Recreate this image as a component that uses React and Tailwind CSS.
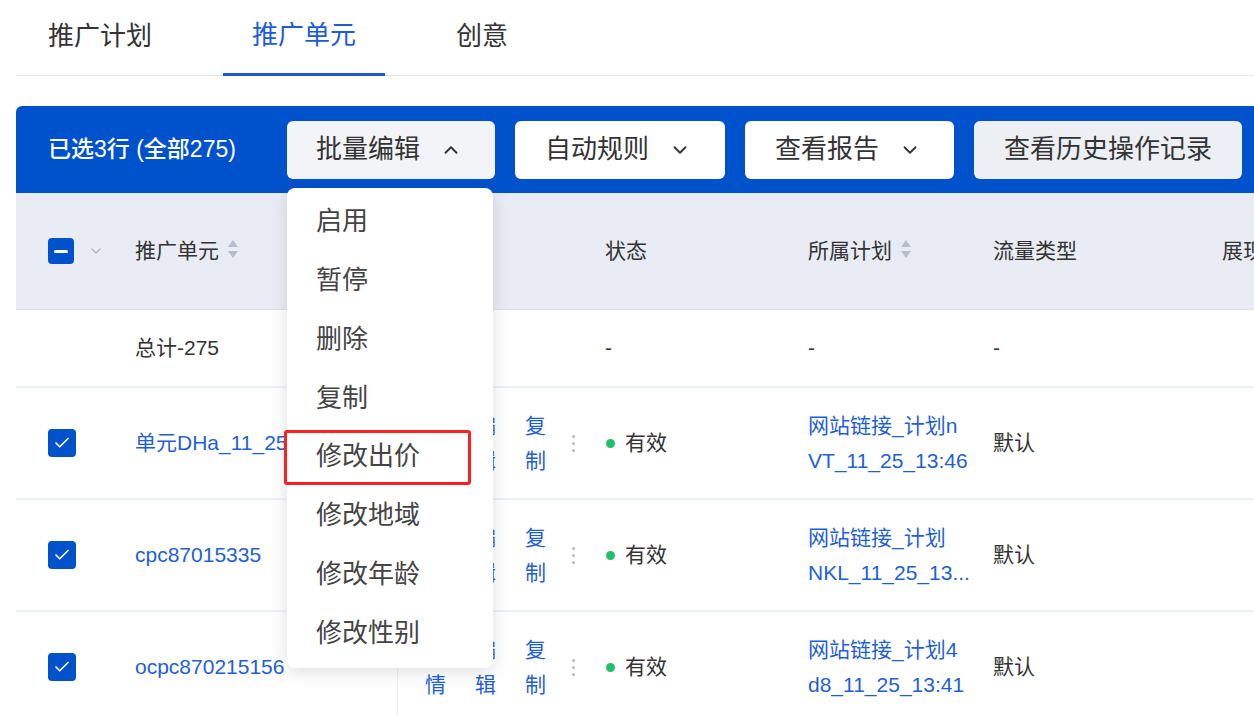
import { ChevronDown, ChevronUp, Check } from 'lucide-react';

const FONT = "font-['Liberation_Sans','Noto_Sans_CJK_SC',sans-serif]";

const MENU = ['启用', '暂停', '删除', '复制', '修改出价', '修改地域', '修改年龄', '修改性别'];

const ROWS = [
  { name: '单元DHa_11_25_13:46', plan: ['网站链接_计划n', 'VT_11_25_13:46'] },
  { name: 'cpc87015335', plan: ['网站链接_计划', 'NKL_11_25_13...'] },
  { name: 'ocpc870215156', plan: ['网站链接_计划4', 'd8_11_25_13:41'] },
];

function SortIcon() {
  return (
    <svg width="12" height="20" viewBox="0 0 12 20" className="ml-[8px] -mt-[4px] shrink-0">
      <path d="M6 1 L11 8 H1 Z" fill="#b8bfcc" />
      <path d="M6 19 L11 12 H1 Z" fill="#b8bfcc" />
    </svg>
  );
}

function CheckBox() {
  return (
    <div className="w-[28px] h-[28px] rounded-[4px] bg-[#0052cc] flex items-center justify-center">
      <Check size={18} strokeWidth={2.2} color="#fff" />
    </div>
  );
}

function VerticalLink({ text }) {
  return (
    <div className="w-[22px] shrink-0 flex flex-col leading-[35px] text-[#1f5fd6]">
      {text.split('').map((c, i) => (
        <span key={i}>{c}</span>
      ))}
    </div>
  );
}

function MoreDots() {
  return (
    <div className="flex flex-col gap-[4px] -ml-[3px] shrink-0">
      <span className="w-[3px] h-[3px] rounded-full bg-[#b5bac4]" />
      <span className="w-[3px] h-[3px] rounded-full bg-[#b5bac4]" />
      <span className="w-[3px] h-[3px] rounded-full bg-[#b5bac4]" />
    </div>
  );
}

export default function App() {
  return (
    <div className={`w-[1254px] h-[716px] overflow-hidden bg-white pl-4 text-[#333] ${FONT}`}>
      {/* Tabs */}
      <div className="flex h-[76px] border-b border-[#dfe3ea] gap-[41px] pl-[2px]">
        <div className="px-[30px] flex items-center text-[26px] text-[#333] pb-[2px]">推广计划</div>
        <div className="px-[29px] flex items-center text-[26px] text-[#1d5bd6] border-b-[3px] border-[#1d5bd6] -mb-px pb-[2px]">推广单元</div>
        <div className="px-[30px] flex items-center text-[26px] text-[#333] pb-[2px]">创意</div>
      </div>

      {/* Batch toolbar */}
      <div className="mt-[30px] h-[87px] bg-[#0052cc] rounded-tl-[6px] flex items-center pl-8">
        <div className="w-[239px] shrink-0 text-white text-[23px] font-medium">已选3行 (全部275)</div>
        <div className="flex items-center gap-[20px] shrink-0">
          <div className="relative">
            <button className="h-[58px] w-[208px] rounded-[6px] bg-[#f2f4f8] flex items-center pl-[29px] text-[26px] text-[#333]">
              批量编辑
              <ChevronUp size={22} strokeWidth={2} className="ml-[20px] text-[#333]" />
            </button>
            {/* Dropdown */}
            <div className="absolute left-0 top-full mt-[9px] w-[206px] bg-white rounded-[8px] shadow-[0_4px_18px_rgba(0,0,0,0.13)] py-[5px] z-10">
              {MENU.map((m) => (
                <div key={m} className="relative h-[58.75px] flex items-center pl-[29px] text-[26px] text-[#444]">
                  {m}
                  {m === '修改出价' && (
                    <div className="absolute -left-[3px] right-[22px] top-[2px] bottom-[1px] border-[3px] border-[#ff1f1f] rounded-[3px]" />
                  )}
                </div>
              ))}
            </div>
          </div>
          <button className="h-[58px] w-[210px] rounded-[6px] bg-white flex items-center pl-[30px] text-[26px] text-[#333]">
            自动规则
            <ChevronDown size={22} strokeWidth={2} className="ml-[20px] text-[#333]" />
          </button>
          <button className="h-[58px] w-[209px] rounded-[6px] bg-white flex items-center pl-[30px] text-[26px] text-[#333]">
            查看报告
            <ChevronDown size={22} strokeWidth={2} className="ml-[20px] text-[#333]" />
          </button>
          <button className="h-[58px] w-[268px] rounded-[6px] bg-[#eceff4] flex items-center justify-center text-[26px] text-[#333]">
            查看历史操作记录
          </button>
        </div>
      </div>

      {/* Table header */}
      <div className="h-[117px] bg-[#e9ecf4] border-b border-[#dce0e8] flex items-center text-[21px]">
        <div className="w-[103px] shrink-0 flex items-center pl-8 gap-[14px]">
          <div className="w-[26px] h-[26px] rounded-[4px] bg-[#0052cc] flex items-center justify-center">
            <span className="w-[14px] h-[3px] bg-white rounded-sm" />
          </div>
          <ChevronDown size={16} strokeWidth={2} className="text-[#b0b6c3]" />
        </div>
        <div className="w-[278px] shrink-0 pl-4 flex items-center">推广单元<SortIcon /></div>
        <div className="w-[193px] shrink-0" />
        <div className="w-[202px] shrink-0 pl-[15px]">状态</div>
        <div className="w-[185px] shrink-0 pl-4 flex items-center">所属计划<SortIcon /></div>
        <div className="w-[229px] shrink-0 pl-4">流量类型</div>
        <div className="shrink-0 pl-4 whitespace-nowrap">展现量</div>
      </div>

      {/* Total row */}
      <div className="h-[78px] border-b-2 border-[#edf0f5] flex items-center text-[21px]">
        <div className="w-[103px] shrink-0" />
        <div className="w-[278px] shrink-0 pl-4">总计-275</div>
        <div className="w-[193px] shrink-0" />
        <div className="w-[202px] shrink-0 pl-[15px]">-</div>
        <div className="w-[185px] shrink-0 pl-4">-</div>
        <div className="w-[229px] shrink-0 pl-4">-</div>
        <div className="flex-1" />
      </div>

      {/* Data rows */}
      {ROWS.map((r) => (
        <div key={r.name} className="h-[112px] border-b-2 border-[#edf0f5] flex items-stretch text-[21px]">
          <div className="w-[103px] shrink-0 flex items-center pl-8">
            <CheckBox />
          </div>
          <div className="w-[278px] shrink-0 pl-4 pr-2 flex items-center text-[#1f5fd6] whitespace-nowrap overflow-hidden">{r.name}</div>
          <div className="w-[193px] shrink-0 border-l border-[#edf0f5] flex items-center pl-[27px] gap-[28px]">
            <VerticalLink text="详情" />
            <VerticalLink text="编辑" />
            <VerticalLink text="复制" />
            <MoreDots />
          </div>
          <div className="w-[202px] shrink-0 pl-[16px] flex items-center">
            <span className="w-[9px] h-[9px] rounded-full bg-[#1fc06a] mr-[10px]" />
            有效
          </div>
          <div className="w-[185px] shrink-0 pl-4 flex flex-col justify-center leading-[35px] text-[#1f5fd6] whitespace-nowrap">
            <span>{r.plan[0]}</span>
            <span>{r.plan[1]}</span>
          </div>
          <div className="w-[229px] shrink-0 pl-4 flex items-center">默认</div>
          <div className="flex-1" />
        </div>
      ))}
    </div>
  );
}
